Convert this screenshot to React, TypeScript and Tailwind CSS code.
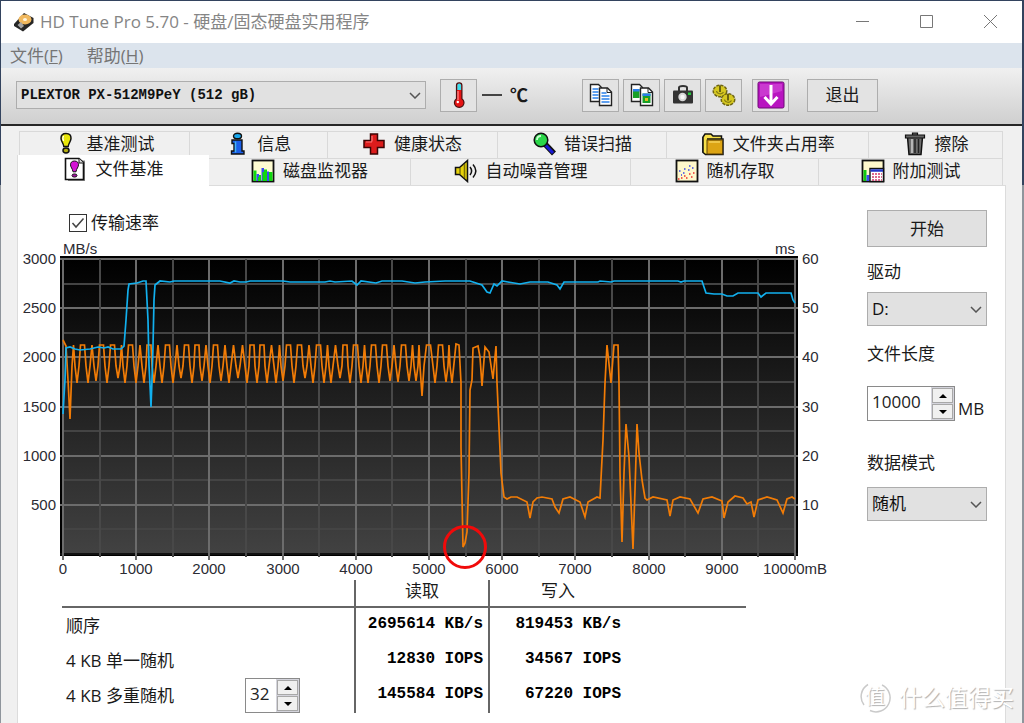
import { useState } from "react";
import type { ReactNode } from "react";

interface Tab {
  id: string;
  label: string;
  icon: ReactNode;
}

interface SpinnerProps {
  id: string;
  label: string;
  value: number;
  step: number;
  onChange: (value: number) => void;
  className: string;
}

/* ---------- icons ---------- */

const BulbIcon = () => (
  <svg viewBox="0 0 24 24" className="size-6" aria-hidden>
    <path d="M12 1.5c-3.8 0-5 2-5 4.8 0 3.4 2.3 4.2 2.8 8.2h4.4c.5-4 2.8-4.8 2.8-8.2 0-2.8-1.2-4.800-5-4.800z" fill="#e8e60a" stroke="#111" strokeWidth="1.5" />
    <path d="M9.6 4c-1.300 1.800-.8 3.500 0 5" stroke="#fff" strokeWidth="1.2" fill="none" />
    <ellipse cx="12" cy="18.5" rx="3" ry="2.4" fill="#b5ae10" stroke="#111" strokeWidth="1.5" />
  </svg>
);

const InfoIcon = () => (
  <svg viewBox="0 0 24 24" className="size-6" aria-hidden>
    <ellipse cx="12.5" cy="4" rx="4" ry="2.8" fill="#19a8ee" stroke="#111" strokeWidth="1.4" />
    <path d="M7 8h10v11h2v3H6.5v-3H9v-7.500H7z" fill="#1b5fe8" stroke="#111" strokeWidth="1.4" />
    <path d="M10.5 9.5v11" stroke="#41b4f7" strokeWidth="1.5" />
  </svg>
);

const CrossIcon = () => (
  <svg viewBox="0 0 24 24" className="size-6" aria-hidden>
    <path d="M8.5 2h7v6.5H22v7h-6.500V22h-7v-6.500H2v-7h6.500z" fill="#dc1c1c" stroke="#3a0505" strokeWidth="1.5" />
    <path d="M10 9.5V4M4 10h6" stroke="#f77" strokeWidth="1.2" />
  </svg>
);

const MagnifierIcon = () => (
  <svg viewBox="0 0 24 24" className="size-6" aria-hidden>
    <path d="M13 12l9 9.5" stroke="#111" strokeWidth="5.5" />
    <path d="M13.5 13l7.5 8" stroke="#1919d6" strokeWidth="3" />
    <circle cx="9" cy="8" r="6.8" fill="#2bd64a" stroke="#111" strokeWidth="1.5" />
    <path d="M5 8c0-2.5 1.5-4 4-4" stroke="#c9ffd2" strokeWidth="1.8" fill="none" />
  </svg>
);

const FolderIcon = () => (
  <svg viewBox="0 0 24 24" className="size-6" aria-hidden>
    <path d="M2 20.5V5l2-3h6l2 2h8.500v3" fill="#f7e04a" stroke="#111" strokeWidth="1.5" />
    <path d="M6 7h16v15.500H4.500L2 20.500V5" fill="#f7e04a" stroke="#111" strokeWidth="1.5" />
    <rect x="6" y="8" width="15.5" height="14" fill="#dca414" stroke="#5c4306" />
    <path d="M8 10h11" stroke="#f4d25a" strokeWidth="1.5" />
  </svg>
);

const TrashIcon = () => (
  <svg viewBox="0 0 24 24" className="size-6" aria-hidden>
    <path d="M4.5 5L6 22.5h12L19.500 5z" fill="#6d6d6d" stroke="#111" strokeWidth="1.5" />
    <path d="M9 7v14" stroke="#c8c8c8" strokeWidth="1.6" />
    <path d="M12 7v14M15.5 7v14" stroke="#222" strokeWidth="1.5" />
    <path d="M2.500 3h19v3h-19zM9.500 1h5v2h-5z" fill="#666" stroke="#111" strokeWidth="1.2" />
  </svg>
);

const FileTestIcon = () => (
  <svg viewBox="0 0 24 24" className="size-6" aria-hidden>
    <path d="M4 3.5h17V24H4" fill="#8a8a8a" />
    <path d="M1.500 1.500h13.500l4.500 4V22.500h-18z" fill="#fff" stroke="#111" strokeWidth="1.6" />
    <path d="M15 1.500V6h4.500" fill="#ddd" stroke="#111" />
    <path d="M10.500 4c-3 0-4 1.800-4 3.800 0 2.500 2 3.500 2.500 7h3c.5-3.500 2.500-4.500 2.500-7 0-2-1-3.800-4-3.800z" fill="#d414d4" stroke="#111" />
    <ellipse cx="10.5" cy="18.5" rx="2.5" ry="1.6" fill="#a010a0" stroke="#111" />
  </svg>
);

const MonitorIcon = () => (
  <svg viewBox="0 0 24 24" className="size-6" aria-hidden>
    <rect x="1.5" y="1.5" width="21" height="21" fill="#fffcd2" stroke="#111" strokeWidth="1.8" />
    <path d="M2.500 11.500h3V22h-3zM8 16h2v6H8zM13 10.500h3V22h-3zM18 13h3.500v9H18z" fill="#10d810" />
    <path d="M5.500 15H8v7H5.500zM10.500 9h2.500v13h-2.500zM16 12.500h2V22h-2z" fill="#3a4df0" />
    <path d="M7 18h2v4H7zM11.500 13h3v9h-3z" fill="#10d810" />
  </svg>
);

const SpeakerIcon = () => (
  <svg viewBox="0 0 24 24" className="size-6" aria-hidden>
    <path d="M1.500 8.500h4l8-7v21l-8-7h-4z" fill="#e6d20c" stroke="#111" strokeWidth="1.5" />
    <path d="M6 9v6M10.500 5v14" stroke="#7d7108" strokeWidth="1.5" />
    <path d="M16 8c2 2.500 2 5.500 0 8M19 5.500c3.500 4 3.500 9 0 13" stroke="#111" strokeWidth="1.5" fill="none" />
  </svg>
);

const ScatterIcon = () => (
  <svg viewBox="0 0 24 24" className="size-6" aria-hidden>
    <rect x="1.5" y="1.5" width="21" height="21" fill="#fff8cc" stroke="#111" strokeWidth="1.8" />
    <path d="M4 12h1.500M8 14h1.500M9 10h1.500M13 11h1.500M14 7h1.500M17 9h1.500M6 16h1" stroke="#3a46e8" strokeWidth="1.5" />
    <path d="M3 20h1.500M6 19h1.500M9 17h1.500M11 19h1.500M14 15h1.500M16 18h1.500M18 14h1.500" stroke="#ee2a2a" strokeWidth="1.5" />
  </svg>
);

const ExtraIcon = () => (
  <svg viewBox="0 0 24 24" className="size-6" aria-hidden>
    <rect x="1.5" y="1.5" width="21" height="21" fill="#fff8cc" stroke="#111" strokeWidth="1.8" />
    <path d="M2.500 11h3v11h-3z" fill="#10c810" />
    <path d="M5.500 16h3v6h-3z" fill="#3a4df0" />
    <rect x="9" y="9.5" width="13.5" height="13" fill="#fff" stroke="#111" strokeWidth="1.4" />
    <path d="M9.500 11.500h12.500" stroke="#2337c8" strokeWidth="2.5" />
    <path d="M11 15h10M11 18h10M11 21h10" stroke="#d23a6a" strokeWidth="1.5" strokeDasharray="2 1" />
  </svg>
);

const DiskIcon = () => (
  <svg viewBox="0 0 22 20" className="h-5 w-[22px]" aria-hidden>
    <path d="M1 12L11 1l9.500 5v5L10 19.500 1 14z" fill="#262626" />
    <ellipse cx="12" cy="7.5" rx="6.5" ry="5" fill="#f0b85e" />
    <ellipse cx="12" cy="7.5" rx="2" ry="1.6" fill="#fff6e0" />
    <path d="M4.500 13l3.500-3 3 4-3 2.500z" fill="#a5a5a5" />
  </svg>
);

const ThermometerIcon = () => (
  <svg viewBox="0 0 24 28" className="h-7 w-6" aria-hidden>
    <path d="M9.500 4.500a2.700 2.700 0 0 1 5.400 0v13.200a4.800 4.800 0 1 1-5.400 0z" fill="#e61414" stroke="#4a1010" strokeWidth="1.2" />
    <path d="M10.300 4.500a1.900 1.900 0 0 1 3.800 0v4.500h-3.800z" fill="#3be0ee" />
    <path d="M11 10v9" stroke="#ff9090" strokeWidth="1.2" />
    <circle cx="10.8" cy="21" r="1.2" fill="#fff" />
  </svg>
);

const CopyTextIcon = () => (
  <svg viewBox="0 0 24 24" className="size-6" aria-hidden>
    <path d="M1.500 1.500h8l3 3v14h-11z" fill="#fff" stroke="#222" strokeWidth="1.4" />
    <path d="M3.500 6h6M3.500 9h6M3.500 12h6M3.500 15h6" stroke="#2a80ea" strokeWidth="1.5" />
    <path d="M10.500 5h8l4 4v13.500h-12z" fill="#fff" stroke="#222" strokeWidth="1.4" />
    <path d="M18 5v4.500h4.500" fill="none" stroke="#222" />
    <path d="M12.500 10h5M12.500 13h8M12.500 16h8M12.500 19h8" stroke="#2a80ea" strokeWidth="1.5" />
  </svg>
);

const CopyImageIcon = () => (
  <svg viewBox="0 0 24 24" className="size-6" aria-hidden>
    <path d="M1.500 1.500h8l3 3v14h-11z" fill="#fff" stroke="#222" strokeWidth="1.4" />
    <path d="M3 6h6.500v9H3z" fill="#18a028" />
    <path d="M3 6h6.500v2.500H3z" fill="#2a80ea" />
    <path d="M10.500 5h8l4 4v13.500h-12z" fill="#fff" stroke="#222" strokeWidth="1.4" />
    <path d="M18 5v4.500h4.500" fill="none" stroke="#222" />
    <path d="M12.500 10.500h8V20h-8z" fill="#18a028" />
    <path d="M12.500 10.500h8V13h-8z" fill="#2a80ea" />
    <path d="M15 15h3v3h-3z" fill="#e0c020" />
  </svg>
);

const CameraIcon = () => (
  <svg viewBox="0 0 24 24" className="size-6" aria-hidden>
    <path d="M8 8V4.500c0-2 8-2 8 0V8" fill="none" stroke="#333" strokeWidth="2" />
    <rect x="2" y="7.5" width="20" height="13" rx="1" fill="#333" />
    <circle cx="11.5" cy="14" r="4.2" fill="#d8d8d8" />
    <circle cx="11.5" cy="14" r="2.2" fill="#f6f6f6" />
    <path d="M17 9.500h3v2.500h-3z" fill="#24c83c" />
  </svg>
);

const GearsIcon = () => (
  <svg viewBox="0 0 24 24" className="size-6" aria-hidden>
    <g fill="#d2c41c" stroke="#6e6512">
      <ellipse cx="8" cy="8" rx="6.5" ry="5.5" strokeDasharray="3 1" strokeWidth="2" />
      <ellipse cx="16" cy="16.5" rx="6.5" ry="5.5" strokeDasharray="3 1" strokeWidth="2" />
    </g>
    <ellipse cx="8" cy="8" rx="6" ry="5" fill="#d6c820" />
    <ellipse cx="16" cy="16.5" rx="6" ry="5" fill="#d6c820" />
    <path d="M8 2.500v6.500M16 11v6.500" stroke="#6b630e" strokeWidth="2" />
    <path d="M4.500 8c.5 3 5.500 4 7 1M12.500 16.500c.5 3 5.500 4 7 1" stroke="#857b14" strokeWidth="1.2" fill="none" />
  </svg>
);

const SaveIcon = () => (
  <svg viewBox="0 0 28 28" className="size-7" aria-hidden>
    <rect x="1" y="1" width="26" height="26" rx="1.5" fill="#b814c0" stroke="#6d0a74" />
    <path d="M3 3h22v7L3 16z" fill="#d552da" opacity=".6" />
    <path d="M14 4v18M7.500 16l6.500 7 6.500-7" stroke="#fff" strokeWidth="3" fill="none" />
  </svg>
);

/* ---------- chart data, in the coordinates of the chart's viewBox ---------- */

const READ_LINE =
  "63,414 64,396 65,380 66,348 70,347 75,349 80,350 90,349 98,347 104,348 108,347 113,349 121,349 124,346 126,320 128,290 129,284 137,283 143,281 146,281 148,320 149,365 150,385 151,407 152,380 153,346 154,300 155,285 160,281 170,282 174,281 220,281 230,283 234,281 240,282 246,282 250,281 283,281 290,282 325,282 330,281 335,282 352,281 357,285 361,281 376,283 382,281 402,281 415,283 425,282 445,281 458,281 470,281 482,285 487,292 490,293 494,284 497,286 502,281 508,282 520,284 530,282 548,282 557,285 560,289 564,282 598,282 600,281 611,282 614,281 678,281 681,282 684,281 702,281 706,293 714,294 722,294 727,296 733,296 738,293 758,293 761,297 766,293 791,293 793,300 795,303";

const WRITE_TAIL =
  "456,344 459,345 461,383 461,447 463,547 465,543 467,532 469,473 470,390 472,380 473,348 478,346 480,357 482,386 485,347 489,352 493,379 496,346 497,383 500,450 501,473 504,497 507,499 511,497 517,497 527,502 530,518 533,502 537,498 542,497 552,499 555,507 559,513 563,499 570,497 580,502 585,517 588,502 597,497 600,498 603,440 605,383 607,345 611,383 614,345 618,345 619,383 620,473 622,542 624,473 626,424 629,457 631,503 633,549 635,490 637,424 639,453 642,480 645,498 647,500 653,497 667,500 670,516 673,500 680,497 690,499 698,513 703,499 712,497 722,501 724,518 728,502 735,496 743,498 747,504 751,502 754,517 758,500 767,497 777,500 783,513 787,499 792,497 795,499";

// dips of the regular part of the write curve
const WRITE_DIPS = [
  [70, 419], [77, 383], [88, 383], [96, 381], [107, 383], [118, 378], [125, 383], [136, 383], [144, 383],
  [154, 383], [162, 383], [173, 383], [181, 378], [192, 383], [202, 381], [210, 383], [221, 381], [229, 383],
  [238, 378], [247, 383], [257, 383], [267, 383], [276, 383], [283, 381], [294, 383], [305, 378], [313, 383],
  [324, 383], [331, 383], [340, 378], [350, 383], [361, 383], [368, 383], [379, 383], [390, 381], [398, 382],
  [409, 381], [416, 381], [422, 396], [435, 383], [446, 382], [452, 383],
];

const buildWriteLine = () => {
  const points = ["63,340", "66,346", "68,380"];
  WRITE_DIPS.forEach(([x, y], i) => {
    points.push(`${x},${y}`);
    const next = WRITE_DIPS[i + 1];
    if (!next) return;
    const gap = next[0] - x;
    const mid = (next[0] + x) / 2;
    if (gap >= 10) {
      points.push(`${x + 2},366 ${mid - 2},345 ${mid + 2},345 ${next[0] - 2},366`);
    } else {
      points.push(`${x + 2},366 ${mid},345 ${next[0] - 2},366`);
    }
  });
  return points.join(" ") + " " + WRITE_TAIL;
};

const WRITE_LINE = buildWriteLine();

const xAt = (mb: number) => 63 + mb * 0.0732;
const yAt = (rate: number) => 554 - rate * 0.0983;
const halfSteps = Array.from({ length: 21 }, (_, i) => i * 500);
const rateSteps = Array.from({ length: 13 }, (_, i) => i * 250);

function Chart() {
  return (
    <svg
      viewBox="18 240 820 340"
      role="img"
      aria-label="传输速率"
      className="block h-auto w-full font-['Liberation_Sans',sans-serif] text-[15px]"
    >
      <defs>
        <linearGradient id="plot" x1="0" y1="0" x2="0" y2="1">
          <stop offset="0" stopColor="#000" />
          <stop offset="1" stopColor="#424242" />
        </linearGradient>
      </defs>
      <rect x="60" y="256" width="738" height="300" fill="#000" />
      <rect x="63" y="259" width="733" height="295" fill="url(#plot)" />

      {rateSteps.map((r) => (
        <path
          key={r}
          d={`M${r % 500 ? 63 : 60} ${Math.round(yAt(r))}H${r % 500 ? 796 : 798}`}
          stroke={r === 0 ? "#111" : r % 500 ? "#444" : "#6c6c6c"}
          strokeWidth="2"
        />
      ))}
      {halfSteps.map((m) => (
        <path
          key={m}
          d={`M${Math.round(xAt(m))} 259V${m % 1000 ? 557 : 560}`}
          stroke={m % 1000 ? "#484848" : "#6c6c6c"}
          strokeWidth="2"
        />
      ))}

      <polyline points={WRITE_LINE} fill="none" stroke="#f27c06" strokeWidth="1.7" />
      <polyline points={READ_LINE} fill="none" stroke="#12b0ee" strokeWidth="1.7" />

      <g fill="#2b2b33">
        <text x="63" y="254">MB/s</text>
        <text x="795" y="254" textAnchor="end">ms</text>
        {[3000, 2500, 2000, 1500, 1000, 500].map((r) => (
          <text key={r} x="56" y={Math.round(yAt(r)) + 5} textAnchor="end">{r}</text>
        ))}
        {[60, 50, 40, 30, 20, 10].map((t) => (
          <text key={t} x="802" y={Math.round(yAt(t * 50)) + 5}>{t}</text>
        ))}
        {halfSteps.filter((m) => m % 1000 === 0).map((m) => (
          <text key={m} x={Math.round(xAt(m))} y="574" textAnchor="middle">
            {m === 10000 ? "10000mB" : m}
          </text>
        ))}
      </g>

      <circle cx="465" cy="547" r="20.5" fill="none" stroke="#f00a0a" strokeWidth="3" />
    </svg>
  );
}

/* ---------- controls ---------- */

function Dropdown({ id, label, options, className }: { id: string; label?: string; options: string[]; className: string }) {
  return (
    <div className="relative">
      <select
        id={id}
        aria-label={label}
        className={`block w-full appearance-none border border-[#adadad] bg-[#e1e1e1] pl-1 pr-8 text-[#111] ${className}`}
      >
        {options.map((o) => (
          <option key={o}>{o}</option>
        ))}
      </select>
      <svg viewBox="0 0 12 7" className="pointer-events-none absolute inset-y-0 right-[5px] my-auto h-[7px] w-3" aria-hidden>
        <path d="M1 1l5 5 5-5" fill="none" stroke="#555" strokeWidth="1.5" />
      </svg>
    </div>
  );
}

function Spinner({ id, label, value, step, onChange, className }: SpinnerProps) {
  return (
    <div className={`flex h-[35px] border border-[#8a8a8a] bg-white ${className}`}>
      <input
        id={id}
        aria-label={label}
        value={value}
        onChange={(e) => onChange(Number(e.target.value) || 0)}
        className="w-0 min-w-0 flex-1 pb-1 pl-1 text-[#222] outline-none"
      />
      <div className="flex w-[23px] flex-col gap-px bg-[#d4d4dc] p-px">
        <button
          type="button"
          aria-label={`${label} +`}
          onClick={() => onChange(value + step)}
          className="flex flex-1 items-center justify-center border border-[#a8a8a8] bg-[#f0f0f0]"
        >
          <svg viewBox="0 0 8 4" className="h-1 w-2" aria-hidden><path d="M0 4l4-4 4 4z" /></svg>
        </button>
        <button
          type="button"
          aria-label={`${label} -`}
          onClick={() => onChange(Math.max(0, value - step))}
          className="flex flex-1 items-center justify-center border border-[#a8a8a8] bg-[#f0f0f0]"
        >
          <svg viewBox="0 0 8 4" className="h-1 w-2" aria-hidden><path d="M0 0l4 4 4-4z" /></svg>
        </button>
      </div>
    </div>
  );
}

const upperTabs: Tab[] = [
  { id: "bench", label: "基准测试", icon: <BulbIcon /> },
  { id: "info", label: "信息", icon: <InfoIcon /> },
  { id: "health", label: "健康状态", icon: <CrossIcon /> },
  { id: "scan", label: "错误扫描", icon: <MagnifierIcon /> },
  { id: "folder", label: "文件夹占用率", icon: <FolderIcon /> },
  { id: "erase", label: "擦除", icon: <TrashIcon /> },
];

const lowerTabs: Tab[] = [
  { id: "file", label: "文件基准", icon: <FileTestIcon /> },
  { id: "monitor", label: "磁盘监视器", icon: <MonitorIcon /> },
  { id: "aam", label: "自动噪音管理", icon: <SpeakerIcon /> },
  { id: "random", label: "随机存取", icon: <ScatterIcon /> },
  { id: "extra", label: "附加测试", icon: <ExtraIcon /> },
];

const tools = [
  { label: "复制文本", icon: <CopyTextIcon /> },
  { label: "复制图像", icon: <CopyImageIcon /> },
  { label: "屏幕截图", icon: <CameraIcon /> },
  { label: "选项", icon: <GearsIcon /> },
];

const toolButton = "flex h-[33px] w-[37px] items-center justify-center border border-[#adadad] bg-[#e3e3e3]";

const resultCell = "border-l-2 border-[#666] p-0 pb-1 text-right font-['Liberation_Mono',monospace] text-[16px] font-bold text-black";

export default function App() {
  const [active, setActive] = useState("file");
  const [showRate, setShowRate] = useState(true);
  const [fileSize, setFileSize] = useState(10000);
  const [queue, setQueue] = useState(32);

  const renderTab = (tab: Tab) => (
    <button
      key={tab.id}
      type="button"
      role="tab"
      aria-selected={active === tab.id}
      onClick={() => setActive(tab.id)}
      className={
        active === tab.id
          ? "relative z-10 -mb-px -mt-[3px] flex items-center justify-center gap-2 border-l border-[#dcdcdc] bg-white pb-1"
          : "flex items-center justify-center gap-2 border-r border-t border-[#d9d9d9] bg-[#f0f0f0] pb-0.5"
      }
    >
      {tab.icon}
      <span className="whitespace-nowrap">{tab.label}</span>
    </button>
  );

  const results = [
    { label: "顺序", read: "2695614 KB/s", write: "819453 KB/s" },
    { label: "4 KB 单一随机", read: "12830 IOPS", write: "34567 IOPS" },
    { label: "4 KB 多重随机", read: "145584 IOPS", write: "67220 IOPS", spinner: true },
  ];

  return (
    <div className="relative flex min-h-screen flex-col bg-[#f0f0f0] font-['Open_Sans','Noto_Sans_CJK_SC',sans-serif] text-[17px] leading-6 text-[#1a1a1a]">
      <header className="border-l border-r-2 border-t border-[#33435e]">
        <div className="flex h-[42px] items-center justify-between bg-white pl-3 pr-6 text-[#858585]">
          <div className="flex items-center gap-[5px]">
            <DiskIcon />
            <h1>HD Tune Pro 5.70 - 硬盘/固态硬盘实用程序</h1>
          </div>
          <div className="flex gap-[50px]">
            <button type="button" aria-label="最小化">
              <svg viewBox="0 0 14 14" className="size-[14px]" aria-hidden><path d="M0 6.500h13" stroke="#777" /></svg>
            </button>
            <button type="button" aria-label="最大化">
              <svg viewBox="0 0 14 14" className="size-[14px]" aria-hidden><path d="M.5.5h12v12H.5z" fill="none" stroke="#777" /></svg>
            </button>
            <button type="button" aria-label="关闭">
              <svg viewBox="0 0 14 14" className="size-[14px]" aria-hidden><path d="M0 0l13 13M13 0L0 13" stroke="#777" /></svg>
            </button>
          </div>
        </div>

        <nav className="flex h-[25px] items-center gap-6 bg-[#dce4ed] pl-[9px] text-[#757575]">
          <button type="button">文件(<span className="underline">F</span>)</button>
          <button type="button">帮助(<span className="underline">H</span>)</button>
        </nav>

        <div className="flex h-[58px] items-center border-b-2 border-[#262626] bg-linear-to-b from-[#f0f0f0] to-[#cfcfcf] pb-0.5 pl-[15px]">
          <div className="min-w-0 max-w-[410px] flex-1">
            <Dropdown
              id="device"
              label="硬盘"
              options={["PLEXTOR PX-512M9PeY (512 gB)"]}
              className="h-7 font-['Liberation_Mono',monospace] text-[14px] font-bold"
            />
          </div>
          <button type="button" aria-label="温度" className={`ml-[14px] ${toolButton}`}>
            <ThermometerIcon />
          </button>
          <span className="ml-[5px] flex items-center gap-2">
            <span className="h-0.5 w-5 bg-[#444]" />
            <span className="text-[18px] font-bold">℃</span>
          </span>
          <div className="ml-[54px] flex gap-1">
            {tools.map((t) => (
              <button key={t.label} type="button" aria-label={t.label} className={toolButton}>
                {t.icon}
              </button>
            ))}
          </div>
          <button type="button" aria-label="保存" className={`ml-[10px] ${toolButton}`}>
            <SaveIcon />
          </button>
          <button type="button" className="ml-[18px] h-[33px] w-[71px] border border-[#adadad] bg-[#e3e3e3]">
            退出
          </button>
        </div>
      </header>

      <div role="tablist" className="border-l border-r-2 border-[#33435e] px-4 pt-[5px]">
        <div className="ml-0.5 mr-[3px] grid h-[27px] grid-cols-[170fr_138fr_170fr_170fr_202fr_134fr] border-l border-[#d9d9d9]">
          {upperTabs.map(renderTab)}
        </div>
        <div className="mr-[3px] grid h-[27px] grid-cols-[192fr_202fr_220fr_188fr_184fr]">
          {lowerTabs.map(renderTab)}
        </div>
      </div>

      <main className="flex flex-1 border-l border-r-2 border-[#8f959c] px-4">
        <div className="flex flex-1 gap-[29px] border-x border-t border-[#dcdcdc] bg-white pr-[18px]">
          <section className="min-w-0 flex-1 pt-[25px]">
            <div className="mb-[5px] ml-[51px] flex h-6 items-center gap-1">
              <span className="grid size-[18px] place-items-center">
                <input
                  id="rate"
                  type="checkbox"
                  checked={showRate}
                  onChange={(e) => setShowRate(e.target.checked)}
                  className="col-start-1 row-start-1 size-[18px] appearance-none border border-[#333] bg-white"
                />
                {showRate && (
                  <svg viewBox="0 0 14 14" className="pointer-events-none col-start-1 row-start-1 size-[14px]" aria-hidden>
                    <path d="M1.500 7l3.500 4 7.500-8.500" fill="none" stroke="#444" strokeWidth="1.5" />
                  </svg>
                )}
              </span>
              <label htmlFor="rate">传输速率</label>
            </div>

            <Chart />

            <table className="ml-[44px] w-[684px] max-w-full table-fixed border-separate border-spacing-0">
              <colgroup>
                <col className="w-[292px]" />
                <col className="w-[134px]" />
                <col />
              </colgroup>
              <thead>
                <tr className="h-7">
                  <td className="border-b-2 border-[#666] p-0" />
                  <th scope="col" className="border-b-2 border-l-2 border-[#666] p-0 pb-1 font-normal leading-5">读取</th>
                  <th scope="col" className="border-b-2 border-l-2 border-[#666] p-0 pb-1 pr-[120px] font-normal leading-5">写入</th>
                </tr>
              </thead>
              <tbody>
                {results.map((r) => (
                  <tr key={r.label} className="h-[35px]">
                    <th scope="row" className="p-0 pl-1 text-left font-normal">
                      <div className="flex items-center justify-between pr-[54px]">
                        <span>{r.label}</span>
                        {r.spinner && (
                          <Spinner id="queue" label="队列深度" value={queue} step={1} onChange={setQueue} className="w-[55px]" />
                        )}
                      </div>
                    </th>
                    <td className={`pr-[5px] ${resultCell}`}>{r.read}</td>
                    <td className={`pr-[125px] ${resultCell}`}>{r.write}</td>
                  </tr>
                ))}
              </tbody>
            </table>
          </section>

          <aside className="flex w-[120px] shrink-0 flex-col pt-6">
            <button type="button" className="h-[37px] border border-[#adadad] bg-[#e1e1e1]">开始</button>

            <label htmlFor="drive" className="mb-2 mt-[13px]">驱动</label>
            <Dropdown id="drive" options={["D:", "C:"]} className="h-[34px]" />

            <label htmlFor="size" className="mb-5 mt-4">文件长度</label>
            <div className="flex items-end gap-[3px]">
              <Spinner id="size" label="文件长度" value={fileSize} step={100} onChange={setFileSize} className="w-[88px]" />
              <span>MB</span>
            </div>

            <label htmlFor="mode" className="mb-3 mt-[30px]">数据模式</label>
            <Dropdown id="mode" options={["随机", "零"]} className="h-[34px]" />
          </aside>
        </div>
      </main>

      <div className="pointer-events-none absolute bottom-[10px] right-[10px] flex items-center gap-2 text-white [text-shadow:1px_1px_1px_#b0b0b0]">
        <span className="grid size-8 place-items-center">
          <svg viewBox="0 0 32 32" className="col-start-1 row-start-1 size-8" aria-hidden>
            <path d="M9 3.500a14 14 0 0 0-4 20.500M11 29.500a14 14 0 0 0 12-25.500" fill="none" stroke="#cacaca" strokeWidth="1.5" />
          </svg>
          <span className="col-start-1 row-start-1 text-[20px]">值</span>
        </span>
        <span className="text-[23px] leading-8">什么值得买</span>
      </div>
    </div>
  );
}
